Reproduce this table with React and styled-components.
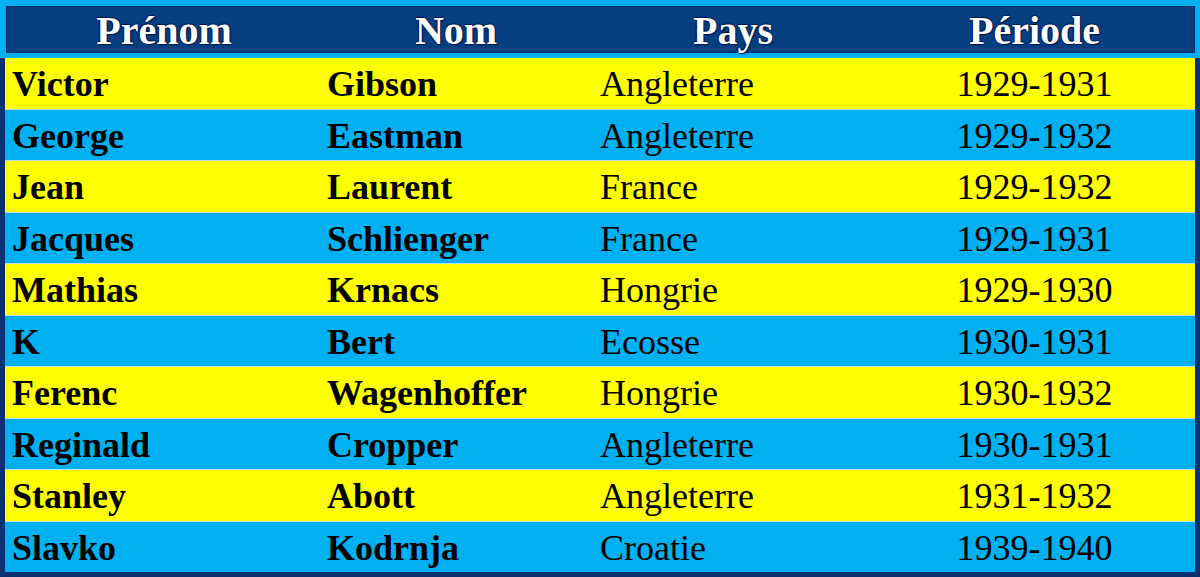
import styled, { createGlobalStyle } from "styled-components";

const GlobalStyle = createGlobalStyle`
  html, body {
    margin: 0;
    padding: 0;
    background: #00b0f0;
  }
  body {
    font-family: "Liberation Serif", "Times New Roman", serif;
  }
`;

const players = [
  ["Victor", "Gibson", "Angleterre", "1929-1931"],
  ["George", "Eastman", "Angleterre", "1929-1932"],
  ["Jean", "Laurent", "France", "1929-1932"],
  ["Jacques", "Schlienger", "France", "1929-1931"],
  ["Mathias", "Krnacs", "Hongrie", "1929-1930"],
  ["K", "Bert", "Ecosse", "1930-1931"],
  ["Ferenc", "Wagenhoffer", "Hongrie", "1930-1932"],
  ["Reginald", "Cropper", "Angleterre", "1930-1931"],
  ["Stanley", "Abott", "Angleterre", "1931-1932"],
  ["Slavko", "Kodrnja", "Croatie", "1939-1940"],
];

const columns = "314px 270px 284px 1fr";

export default function App() {
  return (
    <>
      <GlobalStyle />
      <Page>
        <Header>
          <HeadCell>Prénom</HeadCell>
          <HeadCell>Nom</HeadCell>
          <HeadCell>Pays</HeadCell>
          <HeadCell>Période</HeadCell>
        </Header>
        <Body>
          {players.map((p, i) => (
            <Row key={i} $odd={i % 2 === 1}>
              <Cell $bold>{p[0]}</Cell>
              <Cell $bold>{p[1]}</Cell>
              <Cell $pad={10}>{p[2]}</Cell>
              <Cell $center>{p[3]}</Cell>
            </Row>
          ))}
        </Body>
      </Page>
    </>
  );
}

const Page = styled.div`
  width: 1200px;
  height: 577px;
  display: flex;
  flex-direction: column;
  background: #00b0f0;
  overflow: hidden;
`;

const Header = styled.div`
  display: grid;
  grid-template-columns: ${columns};
  height: 47px;
  margin: 6px 5px 5px 6px;
  background: #063f80;
  border: 1px solid #012a6a;
  box-sizing: border-box;
`;

const HeadCell = styled.div`
  display: flex;
  align-items: center;
  justify-content: center;
  color: #ffffff;
  font-weight: bold;
  font-size: 40px;
  text-shadow: 1px 1px 1px #00154a, -1px 0 1px #00154a, 0 -1px 1px #00154a;
`;

const Body = styled.div`
  flex: 1;
  display: flex;
  flex-direction: column;
  border-left: 5px solid #0b3170;
  border-right: 5px solid #0b3170;
  border-bottom: 5px solid #0b3170;
`;

const Row = styled.div`
  flex: 1;
  display: grid;
  grid-template-columns: 315px 270px 284px 1fr;
  background: ${(p) => (p.$odd ? "#00b0f0" : "#ffff00")};
  & + & {
    border-top: 1px solid #bcdcee;
  }
`;

const Cell = styled.div`
  display: flex;
  align-items: center;
  justify-content: ${(p) => (p.$center ? "center" : "flex-start")};
  padding-left: ${(p) => (p.$center ? 0 : p.$pad || 7)}px;
  padding-top: 2px;
  color: #000000;
  font-size: 36px;
  font-weight: ${(p) => (p.$bold ? "bold" : "normal")};
  white-space: nowrap;
`;
